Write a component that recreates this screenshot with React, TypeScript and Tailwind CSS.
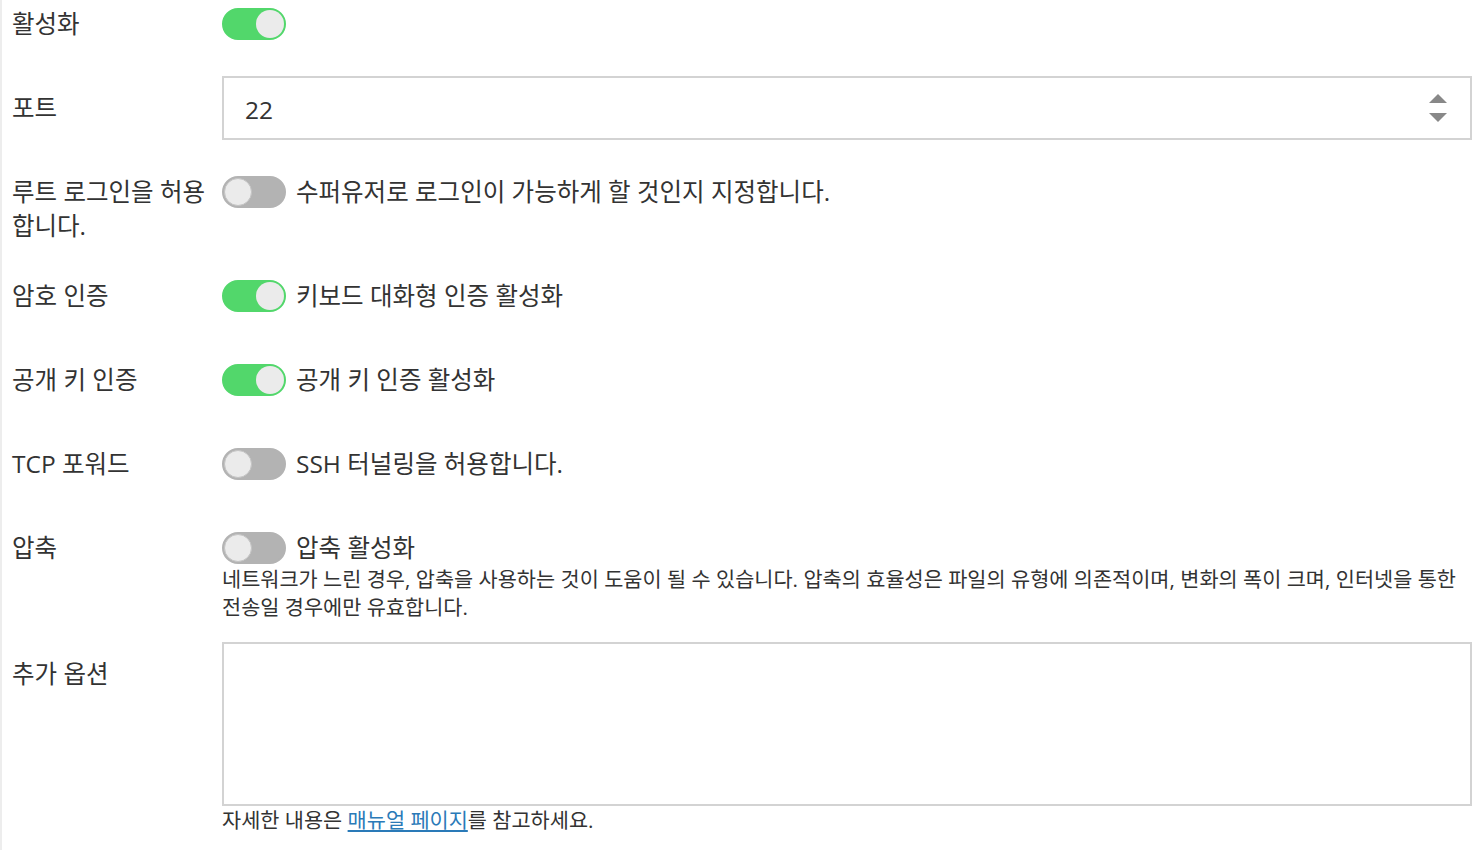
import React, { useState } from 'react';

const font = { fontFamily: '"Open Sans", "Noto Sans CJK KR", sans-serif' };

const Toggle: React.FC<{ on: boolean; onChange: () => void }> = ({ on, onChange }) => (
  <button
    onClick={onChange}
    className={`relative shrink-0 w-16 h-8 rounded-full border-2 transition-colors ${
      on ? 'bg-[#52d76b] border-[#52d76b]' : 'bg-[#b3b3b3] border-[#b3b3b3]'
    }`}
  >
    <span
      className={`absolute top-0 w-7 h-7 rounded-full bg-[#ebebeb] ${
        on ? 'right-0' : 'left-0 border border-[#c4c4c4]'
      }`}
    />
  </button>
);

const Label: React.FC<{ children: React.ReactNode; className?: string }> = ({ children, className }) => (
  <div className={`w-[210px] shrink-0 pr-1 text-[24.5px] leading-[34px] text-[#333] ${className ?? ''}`}>{children}</div>
);

const Text: React.FC<{ children: React.ReactNode }> = ({ children }) => (
  <span className="text-[24.5px] leading-8 text-[#333]">{children}</span>
);

export default function App() {
  const [state, setState] = useState({
    enabled: true,
    root: false,
    password: true,
    pubkey: true,
    tcp: false,
    compress: false,
  });
  const flip = (k: keyof typeof state) => setState(s => ({ ...s, [k]: !s[k] }));

  return (
    <div className="min-h-[850px] bg-white border-l-2 border-[#ededed] pl-[10px] pr-[10px]" style={font}>
      {/* 활성화 */}
      <div className="flex items-center h-12">
        <Label>활성화</Label>
        <Toggle on={state.enabled} onChange={() => flip('enabled')} />
      </div>

      {/* 포트 */}
      <div className="flex items-center mt-[28px]">
        <Label>포트</Label>
        <div className="flex-1 h-16 border-2 border-[#d3d3d3] flex items-center pl-[21px] pr-[22px]">
          <span className="flex-1 text-[24.5px] leading-8 pt-[3px] text-[#333]">22</span>
          <svg width="20" height="32" viewBox="0 0 20 32" className="text-[#888]">
            <path d="M10 2 L19 11 L1 11 Z" fill="currentColor" />
            <path d="M1 21 L19 21 L10 30 Z" fill="currentColor" />
          </svg>
        </div>
      </div>

      {/* 루트 로그인 */}
      <div className="flex items-start mt-[28px]">
        <Label className="pt-[7px]">루트 로그인을 허용합니다.</Label>
        <div className="flex items-center gap-[10px] mt-2">
          <Toggle on={state.root} onChange={() => flip('root')} />
          <Text>수퍼유저로 로그인이 가능하게 할 것인지 지정합니다.</Text>
        </div>
      </div>

      {/* 암호 인증 */}
      <div className="flex items-center h-12 mt-[29px]">
        <Label>암호 인증</Label>
        <div className="flex items-center gap-[10px]">
          <Toggle on={state.password} onChange={() => flip('password')} />
          <Text>키보드 대화형 인증 활성화</Text>
        </div>
      </div>

      {/* 공개 키 인증 */}
      <div className="flex items-center h-12 mt-9">
        <Label>공개 키 인증</Label>
        <div className="flex items-center gap-[10px]">
          <Toggle on={state.pubkey} onChange={() => flip('pubkey')} />
          <Text>공개 키 인증 활성화</Text>
        </div>
      </div>

      {/* TCP 포워드 */}
      <div className="flex items-center h-12 mt-9">
        <Label>TCP 포워드</Label>
        <div className="flex items-center gap-[10px]">
          <Toggle on={state.tcp} onChange={() => flip('tcp')} />
          <Text>SSH 터널링을 허용합니다.</Text>
        </div>
      </div>

      {/* 압축 */}
      <div className="flex items-start mt-9">
        <Label className="pt-[7px]">압축</Label>
        <div className="flex-1 pt-2">
          <div className="flex items-center gap-[10px]">
            <Toggle on={state.compress} onChange={() => flip('compress')} />
            <Text>압축 활성화</Text>
          </div>
          <p className="mt-px text-[20.8px] leading-[28px] text-[#333]">
            네트워크가 느린 경우, 압축을 사용하는 것이 도움이 될 수 있습니다. 압축의 효율성은 파일의 유형에 의존적이며, 변화의 폭이 크며, 인터넷을 통한 전송일 경우에만 유효합니다.
          </p>
        </div>
      </div>

      {/* 추가 옵션 */}
      <div className="flex items-start mt-[21px]">
        <Label className="pt-[15px]">추가 옵션</Label>
        <div className="flex-1">
          <textarea className="block w-full h-[164px] border-2 border-[#d3d3d3] resize-none outline-none p-3 text-[24px]" />
          <p className="text-[20.8px] leading-[28px] text-[#333]">
            자세한 내용은{' '}
            <a href="#" className="text-[#2a7ab8] underline underline-offset-2">매뉴얼 페이지</a>를 참고하세요.
          </p>
        </div>
      </div>
    </div>
  );
}
